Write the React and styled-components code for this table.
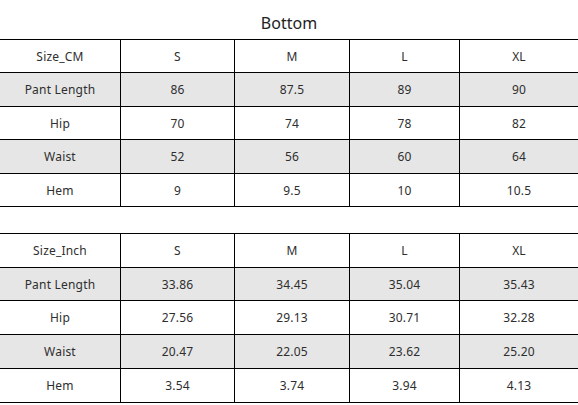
import React from "react";
import styled, { createGlobalStyle } from "styled-components";

const Global = createGlobalStyle`
  html, body { margin: 0; padding: 0; background: #fff; }
  body { font-family: "Noto Sans", "Open Sans", sans-serif; }
`;

const Page = styled.div`
  width: 578px;
  display: flex;
  flex-direction: column;
`;

const Title = styled.div`
  height: 39px;
  display: flex;
  align-items: center;
  justify-content: center;
  padding-top: 6px;
  box-sizing: border-box;
  font-size: 16px;
  color: #222;
`;

const Table = styled.div`
  display: grid;
  grid-template-columns: 121px 114px 115px 110px 1fr;
  border-top: 1px solid #000;
  margin-bottom: ${(p) => p.$gap || 0}px;
`;

const Cell = styled.div`
  height: ${(p) => p.$h}px;
  display: flex;
  align-items: center;
  justify-content: center;
  font-size: 12px;
  letter-spacing: 0.2px;
  color: #2e2e2e;
  background: ${(p) => (p.$shade ? "#e6e6e6" : "#fff")};
  border-bottom: 1px solid #000;
  border-right: ${(p) => (p.$last ? "none" : "1px solid #000")};
`;

const cm = [
  ["Size_CM", "S", "M", "L", "XL"],
  ["Pant Length", "86", "87.5", "89", "90"],
  ["Hip", "70", "74", "78", "82"],
  ["Waist", "52", "56", "60", "64"],
  ["Hem", "9", "9.5", "10", "10.5"],
];

const inch = [
  ["Size_Inch", "S", "M", "L", "XL"],
  ["Pant Length", "33.86", "34.45", "35.04", "35.43"],
  ["Hip", "27.56", "29.13", "30.71", "32.28"],
  ["Waist", "20.47", "22.05", "23.62", "25.20"],
  ["Hem", "3.54", "3.74", "3.94", "4.13"],
];

const heights1 = [32, 33, 32, 33, 32];
const heights2 = [33, 32, 33, 33, 33];

function SizeTable({ rows, heights, gap }) {
  return (
    <Table $gap={gap}>
      {rows.map((r, i) =>
        r.map((c, j) => (
          <Cell
            key={i + "-" + j}
            $h={heights[i]}
            $shade={i % 2 === 1}
            $last={j === r.length - 1}
          >
            {c}
          </Cell>
        ))
      )}
    </Table>
  );
}

export default function App() {
  return (
    <Page>
      <Global />
      <Title>Bottom</Title>
      <SizeTable rows={cm} heights={heights1} gap={26} />
      <SizeTable rows={inch} heights={heights2} />
    </Page>
  );
}
